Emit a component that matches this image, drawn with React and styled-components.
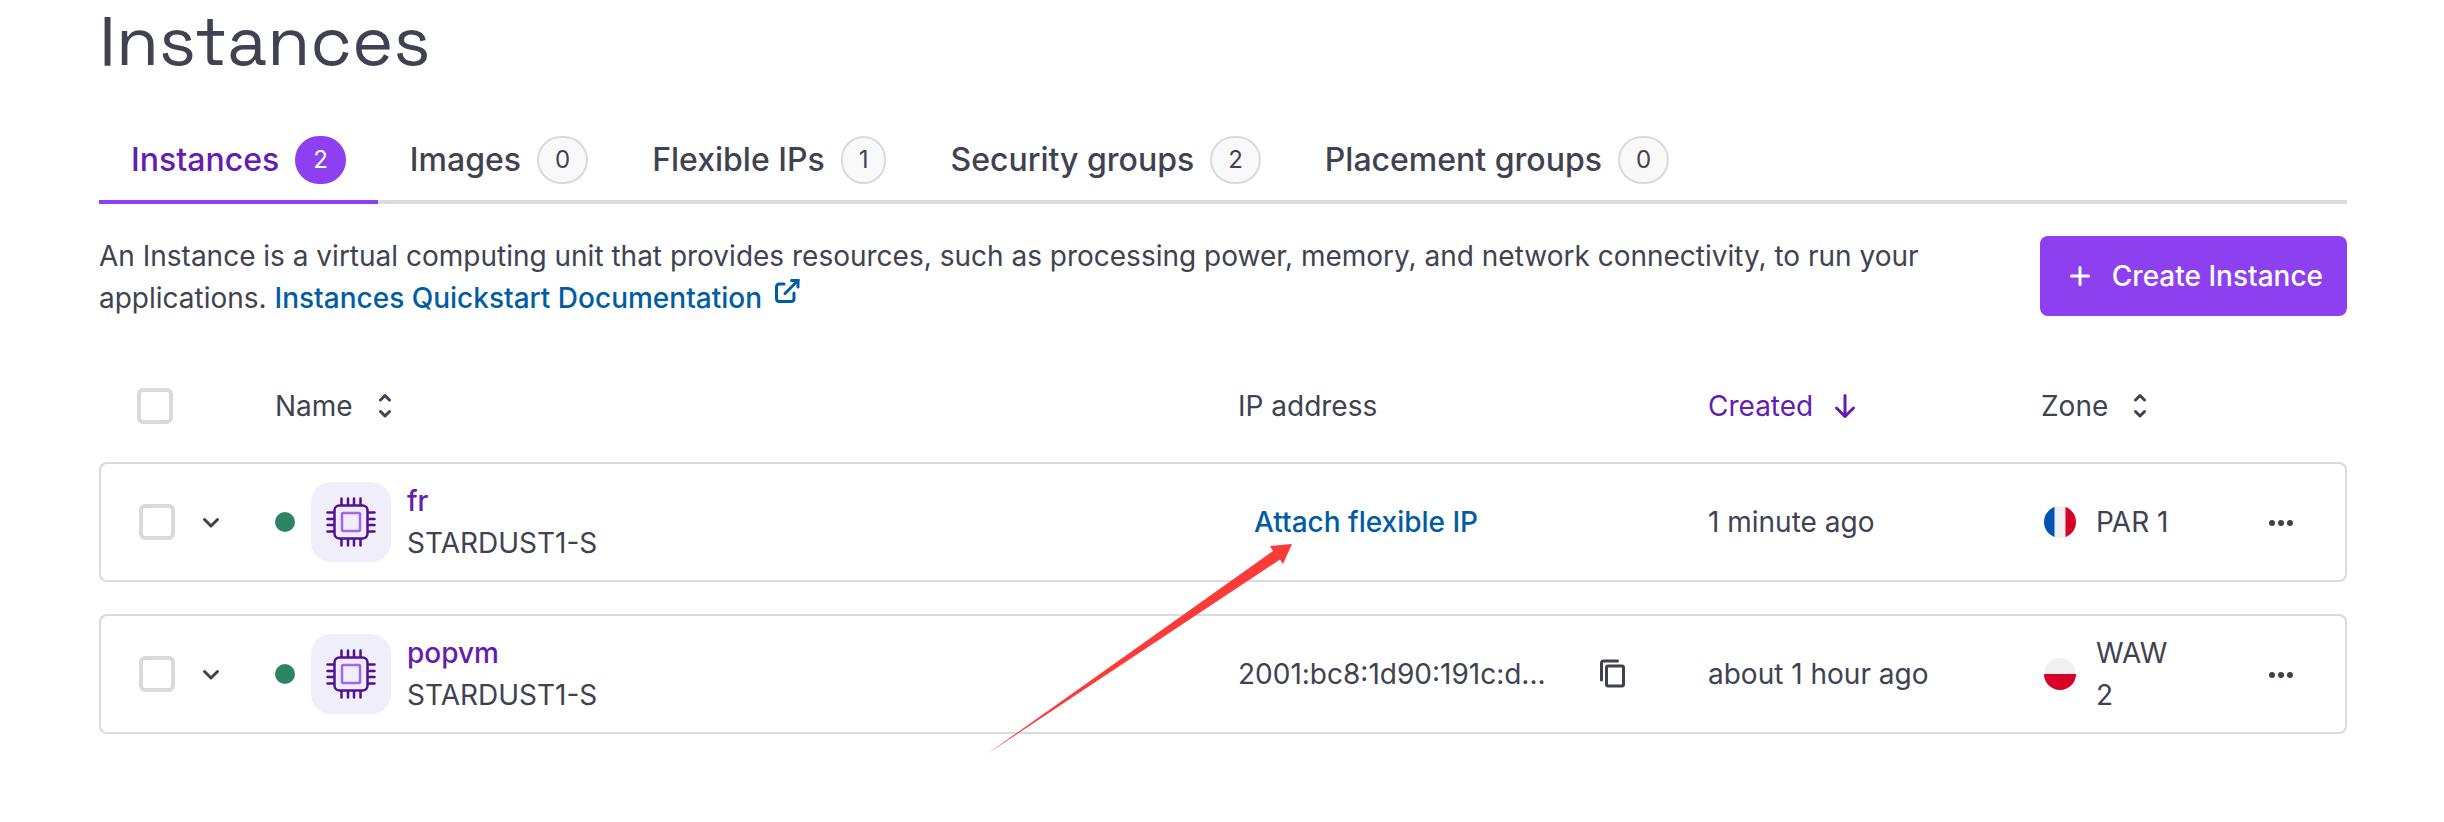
import React from 'react';
import styled, { createGlobalStyle, css } from 'styled-components';

const color = {
  text: '#3f4250',
  purple: '#8c40ef',
  purpleText: '#641cb3',
  link: '#005da4',
  border: '#d9dadd',
  green: '#2c8463',
};

const GlobalStyle = createGlobalStyle`
  *, *::before, *::after { box-sizing: border-box; }
  body {
    margin: 0;
    background: #fff;
    color: ${color.text};
    font: 400 28px/42px Inter, "Liberation Sans", sans-serif;
  }
  button { font: inherit; color: inherit; border: 0; background: none; padding: 0; cursor: pointer; }
  svg { display: block; flex: none; }
`;

const Page = styled.main`
  position: relative;
  padding: 0 97px 88px 99px;
`;

const Title = styled.h1`
  margin: 0 0 38px;
  font-family: "Space Grotesk", Inter, sans-serif;
  font-size: 70px;
  line-height: 82px;
  font-weight: 400;
`;

const Tabs = styled.nav`
  display: flex;
  box-shadow: inset 0 -4px ${color.border};
`;

const Badge = styled.span`
  display: flex;
  align-items: center;
  height: 48px;
  padding: 0 16px;
  border: 2px solid ${color.border};
  border-radius: 24px;
  background: #f9f9fa;
  color: ${color.text};
  font-size: 24px;
  font-weight: 400;
`;

const Tab = styled.button`
  display: flex;
  align-items: center;
  gap: 16px;
  padding: 16px 32px;
  border-bottom: 4px solid transparent;
  font-size: 32px;
  font-weight: 500;
  ${(p) => p.$active && css`
    color: ${color.purpleText};
    border-color: ${color.purple};
    ${Badge} {
      background: ${color.purple};
      border-color: ${color.purple};
      color: #fff;
    }
  `}
`;

const Intro = styled.section`
  display: flex;
  align-items: flex-start;
  justify-content: space-between;
  gap: 96px;
  padding-top: 31px;
`;

const Description = styled.p`
  margin: 0;
`;

const TextLink = styled.a`
  color: ${color.link};
  font-weight: 500;
  text-decoration: none;
  svg { display: inline-block; margin-left: 12px; vertical-align: 4px; }
`;

const CreateButton = styled.button`
  display: flex;
  flex: none;
  align-items: center;
  gap: 16px;
  height: 80px;
  margin-top: 1px;
  padding: 0 24px;
  border-radius: 8px;
  background: ${color.purple};
  color: #fff;
  font-weight: 500;
`;

const Table = styled.table`
  width: 100%;
  margin-top: 31px;
  table-layout: fixed;
  border-collapse: separate;
  border-spacing: 0 32px;
`;

const Col = styled.col`
  width: ${(p) => p.$width};
`;

const HeadCell = styled.th`
  height: 48px;
  padding: 0;
  text-align: left;
  font-weight: 400;
  &:first-child { padding-left: 38px; }
`;

const Cell = styled.td`
  height: 120px;
  padding: 0;
  border: solid ${color.border};
  border-width: 2px 0;
  &:first-child {
    padding-left: 38px;
    border-left-width: 2px;
    border-radius: 8px 0 0 8px;
  }
  &:last-child {
    border-right-width: 2px;
    border-radius: 0 8px 8px 0;
  }
`;

const Sort = styled.button`
  display: flex;
  align-items: center;
  gap: 20px;
  color: ${(p) => (p.$active ? color.purpleText : 'inherit')};
`;

const Checkbox = styled.input.attrs({ type: 'checkbox' })`
  appearance: none;
  display: block;
  flex: none;
  width: 36px;
  height: 36px;
  margin: 0;
  border: 4px solid ${color.border};
  border-radius: 6px;
  background: #fff;
  &:checked { background: ${color.purple}; border-color: ${color.purple}; }
`;

const Line = styled.div`
  display: flex;
  align-items: center;
  gap: ${(p) => p.$gap}px;
`;

const Zone = styled(Line)`
  padding-left: 3px;
`;

const Status = styled.span`
  width: 20px;
  height: 20px;
  border-radius: 50%;
  background: ${color.green};
`;

const ProductIcon = styled.span`
  display: flex;
  align-items: center;
  justify-content: center;
  width: 80px;
  height: 80px;
  border-radius: 20px;
  background: #f1eefc;
`;

const Names = styled.div`
  display: flex;
  flex-direction: column;
  align-items: flex-start;
`;

const NameLink = styled.a`
  color: ${color.purpleText};
  font-weight: 500;
  text-decoration: none;
`;

const AttachButton = styled.button`
  padding: 0 16px;
  color: ${color.link};
  font-weight: 500;
`;

const Ip = styled.span`
  width: 312px;
  white-space: nowrap;
`;

const MenuButton = styled.button`
  display: block;
  margin-left: auto;
  margin-right: 46px;
`;

const Annotation = styled.svg`
  position: absolute;
  left: 987px;
  top: 544px;
  pointer-events: none;
`;

const strokeProps = { fill: 'none', stroke: 'currentColor', strokeLinecap: 'round', strokeLinejoin: 'round' };

const SortIcon = () => (
  <svg width="24" height="28" viewBox="0 0 24 28" strokeWidth="3" {...strokeProps} aria-hidden="true">
    <path d="M7.5 8 12 3.5l4.500 4.500M7.500 19.500 12 24l4.500-4.500" />
  </svg>
);

const ArrowDownIcon = () => (
  <svg width="24" height="28" viewBox="0 0 24 28" strokeWidth="3" {...strokeProps} aria-hidden="true">
    <path d="M12 3.500V24M3.500 16 12 24.500l8.500-8.500" />
  </svg>
);

const ChevronIcon = () => (
  <svg width="24" height="24" viewBox="0 0 24 24" strokeWidth="3" {...strokeProps} aria-hidden="true">
    <path d="M5.500 9.500 12 16l6.500-6.500" />
  </svg>
);

const PlusIcon = () => (
  <svg width="32" height="32" viewBox="0 0 32 32" strokeWidth="3" {...strokeProps} aria-hidden="true">
    <path d="M16 7.500v17M7.500 16h17" />
  </svg>
);

const ExternalIcon = () => (
  <svg width="26" height="26" viewBox="0 0 26 26" strokeWidth="3" {...strokeProps} aria-hidden="true">
    <path d="M10 6H5.500Q2.500 6 2.500 9v11.500q0 3 3 3h11.500q3 0 3-3V15M24 2.500 11 15.500" />
    <path d="M17.500 2.500H24V9" strokeLinejoin="miter" />
  </svg>
);

const CopyIcon = () => (
  <svg width="32" height="32" viewBox="0 0 32 32" strokeWidth="3" {...strokeProps} aria-hidden="true">
    <path d="M5.500 22V5Q5.500 3 7.500 3h14" />
    <rect x="10.500" y="8" width="17" height="20" rx="1.500" />
  </svg>
);

const DotsIcon = () => (
  <svg width="36" height="36" viewBox="0 0 36 36" fill="currentColor" aria-hidden="true">
    <circle cx="9" cy="19" r="3" />
    <circle cx="18" cy="19" r="3" />
    <circle cx="27" cy="19" r="3" />
  </svg>
);

const PIN_OFFSETS = [15.5, 22, 28, 34.5];

const ChipIcon = () => (
  <svg width="50" height="50" viewBox="0 0 50 50" fill="none" stroke="#521094" strokeWidth="2.5" strokeLinecap="round" aria-hidden="true">
    {PIN_OFFSETS.map((p) => (
      <path key={p} d={`M${p} 1.500v6M${p} 42.500v6M1.500 ${p}h6M42.500 ${p}h6`} />
    ))}
    <rect x="8.500" y="8.500" width="33" height="33" rx="5" />
    <rect x="16" y="16" width="18" height="18" rx="1" stroke="#a365f6" />
  </svg>
);

const Flag = ({ country }) => (
  <svg width="32" height="32" viewBox="0 0 32 32" role="img" aria-label={country}>
    <clipPath id={`round-${country}`}><circle cx="16" cy="16" r="16" /></clipPath>
    <g clipPath={`url(#round-${country})`}>
      <path fill="#f0f0f0" d="M0 0h32v32H0z" />
      {country === 'France' ? (
        <>
          <path fill="#0052b4" d="M0 0h10.500v32H0z" />
          <path fill="#d80027" d="M21.500 0H32v32H21.500z" />
        </>
      ) : (
        <path fill="#d80027" d="M0 16h32v16H0z" />
      )}
    </g>
  </svg>
);

const tabs = [
  ['Instances', 2],
  ['Images', 0],
  ['Flexible IPs', 1],
  ['Security groups', 2],
  ['Placement groups', 0],
];

const instances = [
  { name: 'fr', type: 'STARDUST1-S', created: '1 minute ago', country: 'France', zone: 'PAR 1' },
  { name: 'popvm', type: 'STARDUST1-S', ip: '2001:bc8:1d90:191c:d...', created: 'about 1 hour ago', country: 'Poland', zone: 'WAW 2' },
];

const InstanceRow = ({ item }) => (
  <tr>
    <Cell>
      <Line $gap={24}>
        <Checkbox aria-label={`Select ${item.name}`} />
        <button aria-label={`Expand ${item.name}`}><ChevronIcon /></button>
      </Line>
    </Cell>
    <Cell>
      <Line $gap={16}>
        <Status />
        <ProductIcon><ChipIcon /></ProductIcon>
        <Names>
          <NameLink href="#">{item.name}</NameLink>
          <span>{item.type}</span>
        </Names>
      </Line>
    </Cell>
    <Cell>
      {item.ip ? (
        <Line $gap={46}>
          <Ip>{item.ip}</Ip>
          <button aria-label="Copy IP address"><CopyIcon /></button>
        </Line>
      ) : (
        <AttachButton>Attach flexible IP</AttachButton>
      )}
    </Cell>
    <Cell>{item.created}</Cell>
    <Cell>
      <Zone $gap={20}>
        <Flag country={item.country} />
        <span>{item.zone}</span>
      </Zone>
    </Cell>
    <Cell>
      <MenuButton aria-label={`Actions for ${item.name}`}><DotsIcon /></MenuButton>
    </Cell>
  </tr>
);

export default function App() {
  return (
    <>
      <GlobalStyle />
      <Page>
        <Title>Instances</Title>
        <Tabs>
          {tabs.map(([label, count], i) => (
            <Tab key={label} $active={i === 0}>
              {label}
              <Badge>{count}</Badge>
            </Tab>
          ))}
        </Tabs>
        <Intro>
          <Description>
            An Instance is a virtual computing unit that provides resources, such as processing power,
            memory, and network connectivity, to run your applications.{' '}
            <TextLink href="#">Instances Quickstart Documentation<ExternalIcon /></TextLink>
          </Description>
          <CreateButton><PlusIcon />Create Instance</CreateButton>
        </Intro>
        <Table>
          <colgroup>
            <Col $width="176px" />
            <Col />
            <Col $width="470px" />
            <Col $width="333px" />
            <Col $width="140px" />
            <Col $width="166px" />
          </colgroup>
          <thead>
            <tr>
              <HeadCell><Checkbox aria-label="Select all" /></HeadCell>
              <HeadCell><Sort>Name<SortIcon /></Sort></HeadCell>
              <HeadCell>IP address</HeadCell>
              <HeadCell><Sort $active>Created<ArrowDownIcon /></Sort></HeadCell>
              <HeadCell><Sort>Zone<SortIcon /></Sort></HeadCell>
              <HeadCell aria-label="Actions" />
            </tr>
          </thead>
          <tbody>
            {instances.map((item) => <InstanceRow key={item.name} item={item} />)}
          </tbody>
        </Table>
        <Annotation width="306" height="210" viewBox="0 0 306 210" aria-hidden="true">
          <path fill="#fc3a3a" d="M305 0 296 20 293 15.500 0 210 286 7 283 2z" />
        </Annotation>
      </Page>
    </>
  );
}
